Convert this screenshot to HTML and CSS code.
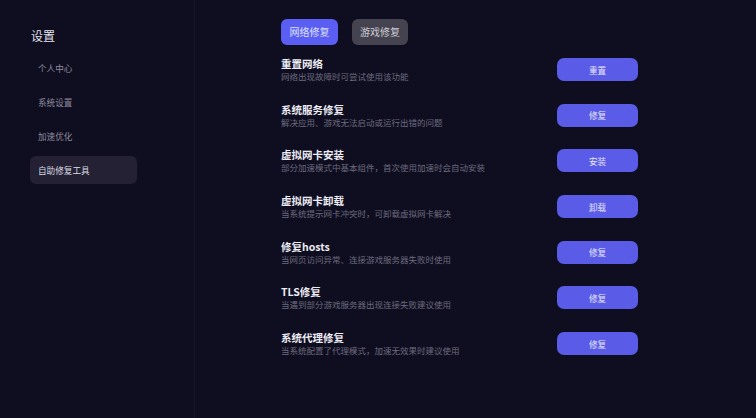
FILE: index.html
```html
<!DOCTYPE html>
<html>
<head>
<meta charset="utf-8">
<title>设置</title>
<link rel="stylesheet" href="styles.css">
</head>
<body>
<div class="app">
  <aside class="sidebar">
    <div class="side-title">设置</div>
    <nav class="menu">
      <div class="menu-item">个人中心</div>
      <div class="menu-item">系统设置</div>
      <div class="menu-item">加速优化</div>
      <div class="menu-item active">自助修复工具</div>
    </nav>
  </aside>
  <main class="main">
    <div class="tabs">
      <div class="tab tab-active">网络修复</div>
      <div class="tab">游戏修复</div>
    </div>
    <div class="list">
      <div class="row">
        <div class="info"><div class="name">重置网络</div><div class="desc">网络出现故障时可尝试使用该功能</div></div>
        <button class="btn">重置</button>
      </div>
      <div class="row">
        <div class="info"><div class="name">系统服务修复</div><div class="desc">解决应用、游戏无法启动或运行出错的问题</div></div>
        <button class="btn">修复</button>
      </div>
      <div class="row">
        <div class="info"><div class="name">虚拟网卡安装</div><div class="desc">部分加速模式中基本组件，首次使用加速时会自动安装</div></div>
        <button class="btn">安装</button>
      </div>
      <div class="row">
        <div class="info"><div class="name">虚拟网卡卸载</div><div class="desc">当系统提示网卡冲突时，可卸载虚拟网卡解决</div></div>
        <button class="btn">卸载</button>
      </div>
      <div class="row">
        <div class="info"><div class="name">修复hosts</div><div class="desc">当网页访问异常、连接游戏服务器失败时使用</div></div>
        <button class="btn">修复</button>
      </div>
      <div class="row">
        <div class="info"><div class="name">TLS修复</div><div class="desc">当遇到部分游戏服务器出现连接失败建议使用</div></div>
        <button class="btn">修复</button>
      </div>
      <div class="row">
        <div class="info"><div class="name">系统代理修复</div><div class="desc">当系统配置了代理模式，加速无效果时建议使用</div></div>
        <button class="btn">修复</button>
      </div>
    </div>
  </main>
</div>
</body>
</html>
```

FILE: styles.css
```css
* { box-sizing: border-box; }
html, body {
  margin: 0;
  padding: 0;
  background: #0f0e20;
  font-family: "Noto Sans CJK SC", "Noto Sans", sans-serif;
}
.app {
  display: flex;
  width: 756px;
  height: 418px;
  overflow: hidden;
}
.sidebar {
  width: 195px;
  flex: none;
  border-right: 1px solid #17152b;
  padding: 28px 0 0 30px;
}
.side-title {
  font-size: 12px;
  line-height: 16px;
  color: #e4e3ec;
  padding-left: 1px;
  margin-bottom: 10px;
}
.menu {
  display: flex;
  flex-direction: column;
  gap: 6px;
}
.menu-item {
  width: 107px;
  height: 28px;
  line-height: 28px;
  padding-left: 8px;
  font-size: 8.6px;
  color: #8e8c9e;
  border-radius: 6px;
}
.menu-item.active {
  background: #232133;
  color: #dcdbe4;
}
.main {
  flex: 1;
  padding: 19px 0 0 86px;
}
.tabs {
  display: flex;
  gap: 14px;
  margin-bottom: 12px;
}
.tab {
  width: 56px;
  height: 26px;
  line-height: 26px;
  text-align: center;
  font-size: 10px;
  border-radius: 6px;
  background: #45434f;
  color: #cfcdd8;
}
.tab-active {
  width: 57px;
  background: #5a5ef2;
  color: #dfe1ff;
}
.list {
  display: flex;
  flex-direction: column;
  gap: 20.7px;
  width: 357px;
}
.row {
  display: flex;
  justify-content: space-between;
  align-items: center;
  height: 25px;
}
.name {
  font-size: 10.5px;
  line-height: 14px;
  font-weight: 700;
  color: #ecebf3;
}
.desc {
  font-size: 8.5px;
  line-height: 11px;
  color: #6c6a7e;
}
.btn {
  width: 81px;
  height: 23px;
  border: 0;
  border-radius: 7px;
  background: #5a5be6;
  color: #e6e6fb;
  font-family: inherit;
  font-size: 8.6px;
  padding: 0;
}
```
